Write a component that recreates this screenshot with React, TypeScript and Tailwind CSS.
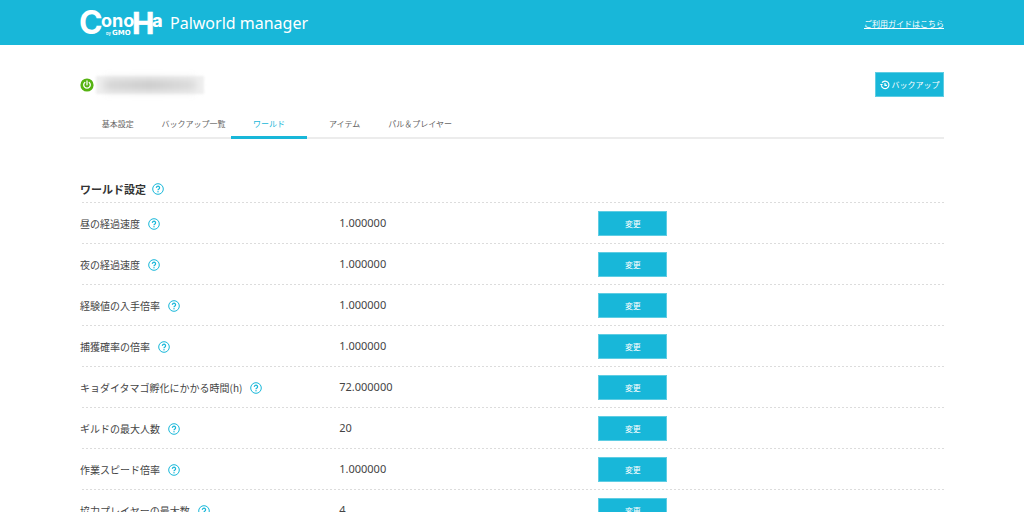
const CYAN_BUTTON =
  "border border-[#5fcde3] bg-[#18b7d9] text-white hover:bg-[#12a5c5] cursor-pointer";

const DOTTED_LINE =
  "bg-[linear-gradient(to_right,#dcdcdc_50%,transparent_50%)] bg-[length:4px_1px] bg-repeat-x";

const tabs = [
  { label: "基本設定" },
  { label: "バックアップ一覧" },
  { label: "ワールド", active: true },
  { label: "アイテム" },
  { label: "パル＆プレイヤー" },
];

const settings = [
  { label: "昼の経過速度", value: "1.000000" },
  { label: "夜の経過速度", value: "1.000000" },
  { label: "経験値の入手倍率", value: "1.000000" },
  { label: "捕獲確率の倍率", value: "1.000000" },
  { label: "キョダイタマゴ孵化にかかる時間(h)", value: "72.000000" },
  { label: "ギルドの最大人数", value: "20" },
  { label: "作業スピード倍率", value: "1.000000" },
  { label: "協力プレイヤーの最大数", value: "4" },
];

function Logo() {
  return (
    <svg viewBox="0 0 84 28" className="h-7 w-[84px] shrink-0 overflow-visible fill-white font-['Inter',sans-serif]" role="img" aria-label="ConoHa by GMO">
      <text x="-1" y="25" fontSize="32" fontWeight="700">C</text>
      <text x="21" y="18" fontSize="18" fontWeight="700">ono</text>
      <text x="52" y="25" fontSize="31" fontWeight="700" fontFamily="Liberation Sans" stroke="#fff" strokeWidth="0.6">H</text>
      <text x="72" y="18" fontSize="18" fontWeight="800">a</text>
      <text x="26" y="26" fontSize="4" fontWeight="600">by</text>
      <text x="32" y="26" fontSize="7" fontWeight="700" fontFamily="DejaVu Sans">GMO</text>
    </svg>
  );
}

function HelpButton({ topic }: { topic: string }) {
  return (
    <button type="button" aria-label={`${topic}のヘルプ`} className="size-3 shrink-0 cursor-pointer">
      <svg viewBox="0 0 12 12" className="size-3" fill="none" stroke="#18b7d9">
        <circle cx="6" cy="6" r="5.3" strokeWidth="1" />
        <path d="M4.4 4.9a1.6 1.6 0 1 1 2.5 1.2c-.6.4-.9.6-.9 1.2" strokeWidth="1.2" />
        <circle cx="6" cy="8.8" r=".7" fill="#18b7d9" stroke="none" />
      </svg>
    </button>
  );
}

function PowerIcon() {
  return (
    <svg viewBox="0 0 14 14" className="size-3.5 shrink-0" role="img" aria-label="起動中">
      <circle cx="7" cy="7" r="6.6" fill="#56b312" />
      <path d="M4.8 4.4a3.3 3.3 0 1 0 4.4 0M7 3v3.8" fill="none" stroke="#fff" strokeWidth="1.3" strokeLinecap="round" />
    </svg>
  );
}

function HistoryIcon() {
  return (
    <svg viewBox="0 0 10 10" className="size-2.5 shrink-0" fill="none" stroke="#fff" strokeWidth="1.2" aria-hidden="true">
      <path d="M1.4 5.6A3.8 3.8 0 1 0 2 2.7" />
      <path d="M5 3v2.4h2" />
      <path d="M0 4l1.4 2L3 4z" fill="#fff" stroke="none" />
    </svg>
  );
}

export default function App() {
  return (
    <div className="h-screen overflow-y-auto bg-white font-['Noto_Sans_CJK_JP',sans-serif] text-[#444]">
      <header className="flex h-[45px] items-center justify-between bg-[#18b7d9] px-20 text-white">
        <div className="flex items-center gap-1.5">
          <Logo />
          <h1 className="font-['Noto_Sans',sans-serif] text-base leading-6">Palworld manager</h1>
        </div>
        <a href="#guide" className="pt-0.5 text-[8px] leading-4 underline">
          ご利用ガイドはこちら
        </a>
      </header>

      <main className="px-20 pt-[27px]">
        <div className="flex items-center justify-between">
          <div className="flex items-center gap-0.5">
            <PowerIcon />
            {/* server name is masked */}
            <div className="h-4.5 w-27 bg-[#f0f0f0] px-2 py-1 blur-[1px]">
              <div className="h-full bg-linear-to-r from-[#d2d2d2] via-[#c4c4c4] to-[#d8d8d8] blur-[4px]" />
            </div>
          </div>
          <button type="button" className={`flex h-[25px] w-[69px] items-center justify-center gap-0.5 whitespace-nowrap text-[8px] ${CYAN_BUTTON}`}>
            <HistoryIcon />
            バックアップ
          </button>
        </div>

        <nav className="mt-3.5 border-b-2 border-[#ececec]">
          <div className="-mb-0.5 grid w-[378px] grid-cols-5">
            {tabs.map((tab) => (
              <a
                key={tab.label}
                href="#tab"
                aria-current={tab.active ? "page" : undefined}
                className={`flex h-7 items-center justify-center whitespace-nowrap border-b-3 text-[8px] ${
                  tab.active ? "border-[#18b7d9] text-[#18b7d9]" : "border-transparent text-[#666]"
                }`}
              >
                {tab.label}
              </a>
            ))}
          </div>
        </nav>

        <section>
          <div className={`mt-9 flex h-7 items-center gap-1.5 bg-bottom ${DOTTED_LINE}`}>
            <h2 className="text-[11px] font-bold text-[#333]">ワールド設定</h2>
            <HelpButton topic="ワールド設定" />
          </div>
          <dl>
            {settings.map((item) => (
              <div key={item.label} className={`grid h-[41px] grid-cols-[30%_30%_40%] items-center bg-bottom ${DOTTED_LINE}`}>
                <dt className="flex items-center gap-2 text-[10px]">
                  {item.label}
                  <HelpButton topic={item.label} />
                </dt>
                <dd className="font-['Noto_Sans',sans-serif] text-[11px]">{item.value}</dd>
                <dd className="flex">
                  <button type="button" className={`h-[25px] w-[69px] text-[8px] ${CYAN_BUTTON}`}>
                    変更
                  </button>
                </dd>
              </div>
            ))}
          </dl>
        </section>
      </main>
    </div>
  );
}
